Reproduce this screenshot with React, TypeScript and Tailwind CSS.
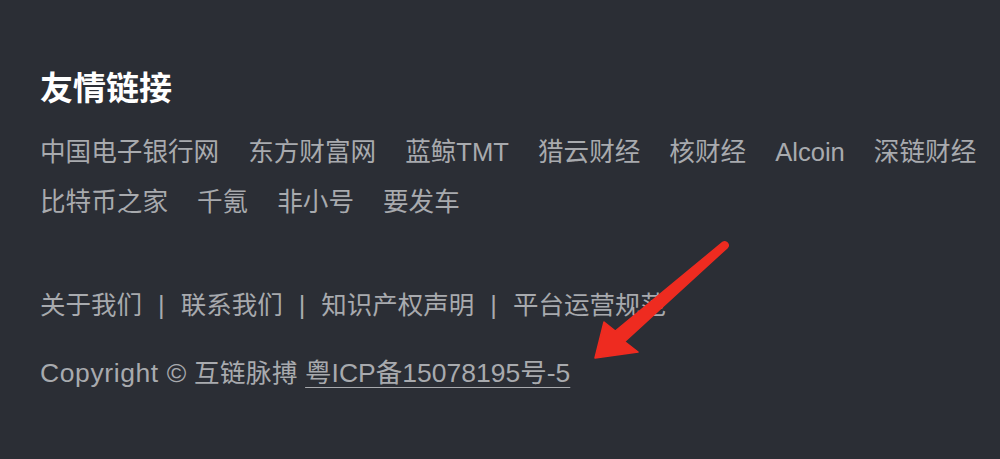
const friends = [
  "中国电子银行网",
  "东方财富网",
  "蓝鲸TMT",
  "猎云财经",
  "核财经",
  "Alcoin",
  "深链财经",
  "比特币之家",
  "千氪",
  "非小号",
  "要发车",
]

const footerLinks = ["关于我们", "联系我们", "知识产权声明", "平台运营规范"]

const Arrow: React.FC = () => (
  <svg className="absolute left-0 top-0 pointer-events-none" width="1000" height="459" viewBox="0 0 1000 459">
    <path
      d="M595 358 L604 322 L615.3 331 L722.7 242.4 A3.5 3.5 0 0 1 727.3 247.6 L624.5 341.6 L638 352 Z"
      fill="#ee2b20"
      stroke="#ee2b20"
      strokeWidth="1.5"
      strokeLinejoin="round"
    />
  </svg>
)

export default function App() {
  return (
    <div
      className="relative w-[1000px] h-[459px] overflow-hidden bg-[#2b2e35] pl-[40px] pt-[69px]"
      style={{ fontFamily: '"Liberation Sans", "Noto Sans CJK SC", sans-serif' }}
    >
      <h2 className="text-[33px] leading-[40px] font-bold text-white">友情链接</h2>

      <div className="mt-[18px] flex flex-wrap gap-x-[29px] w-[950px] text-[25.6px] leading-[50px] text-[#a8aaae]">
        {friends.map((name) => (
          <a key={name} className="whitespace-nowrap">
            {name}
          </a>
        ))}
      </div>

      <div className="mt-[53px] flex items-center text-[25.5px] leading-[50px] text-[#a8aaae]">
        {footerLinks.map((name, i) => (
          <span key={name} className="flex items-center">
            {i > 0 && <span className="mx-[16px]">|</span>}
            <a>{name}</a>
          </span>
        ))}
      </div>

      <div className="mt-[18px] text-[25.5px] leading-[50px] text-[#a8aaae] whitespace-nowrap">
        <span className="text-[26.5px] tracking-[0.6px]">Copyright ©</span>{" "}
        <span className="tracking-[0.5px]">互链脉搏</span>{" "}
        <a className="underline underline-offset-[5px] decoration-1 text-[26.5px]">粤ICP备15078195号-5</a>
      </div>

      <Arrow />
    </div>
  )
}
